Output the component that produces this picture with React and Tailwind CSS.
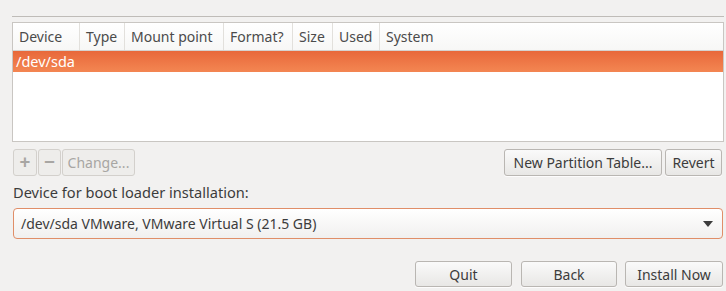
import React from "react";

const font = { fontFamily: '"Noto Sans", "Open Sans", sans-serif' };

function Btn({ children, className = "" }) {
  return (
    <div
      className={
        "flex items-center justify-center rounded-[3px] border border-[#b9b6b2] bg-gradient-to-b from-[#fafafa] to-[#e8e7e5] text-[14px] text-[#3c3c3c] shadow-[0_1px_0_rgba(255,255,255,0.8)] " +
        className
      }
    >
      {children}
    </div>
  );
}

function DisBtn({ children, className = "" }) {
  return (
    <div
      className={
        "flex items-center justify-center rounded-[3px] border border-[#d3d0cc] bg-[#eeedeb] text-[14px] text-[#a8a6a3] " +
        className
      }
    >
      {children}
    </div>
  );
}

export default function App() {
  const cols = [
    ["Device", "w-[67px]"],
    ["Type", "w-[45px]"],
    ["Mount point", "w-[99px]"],
    ["Format?", "w-[69px]"],
    ["Size", "w-[40px]"],
    ["Used", "w-[47px]"],
  ];
  return (
    <div
      className="w-[726px] h-[291px] bg-[#f2f1f0] overflow-hidden flex flex-col"
      style={font}
    >
      <div className="ml-3 mr-[2px] mt-4 h-px bg-[#bfbcb8]" />
      <div className="ml-3 mr-[2px] mt-[5px] h-[120px] border border-[#c9c6c2] bg-white flex flex-col">
        <div className="flex h-[28px] border-b border-[#d5d3cf] bg-gradient-to-b from-[#ffffff] to-[#f7f7f6] text-[14px] text-[#4b4b4b]">
          {cols.map(([t, w]) => (
            <div
              key={t}
              className={w + " flex items-center pl-[6px] border-r border-[#e2e0dc]"}
            >
              {t}
            </div>
          ))}
          <div className="flex-1 flex items-center pl-[6px]">System</div>
        </div>
        <div className="h-[21px] flex items-center pl-[3px] bg-gradient-to-b from-[#e8683a] to-[#f38652] text-white text-[14.5px]">
          /dev/sda
        </div>
      </div>
      <div className="flex mt-[7px] ml-[13px] mr-[4px] h-[27px]">
        <DisBtn className="w-[24px] h-[27px] text-[19px] font-bold text-[#a3a19e]">+</DisBtn>
        <DisBtn className="ml-px w-[23px] h-[27px] text-[19px] font-bold text-[#a3a19e]">−</DisBtn>
        <DisBtn className="ml-px w-[73px] h-[27px]">Change...</DisBtn>
        <div className="flex-1" />
        <Btn className="w-[158px] h-[27px]">New Partition Table...</Btn>
        <Btn className="ml-[3px] w-[57px] h-[27px]">Revert</Btn>
      </div>
      <div className="ml-[13px] mt-[6px] text-[14.6px] text-[#3c3c3c] leading-[20px]">
        Device for boot loader installation:
      </div>
      <div className="ml-[13px] mr-[3px] mt-[6px] h-[31px] rounded-[4px] border border-[#e08e68] bg-gradient-to-b from-[#ffffff] to-[#f1f0ef] flex items-center pl-[7px] pr-[9px] text-[14px] text-[#3c3c3c]">
        <span className="flex-1">/dev/sda VMware, VMware Virtual S (21.5 GB)</span>
        <svg width="10" height="6" viewBox="0 0 10 6">
          <path d="M0 0 L10 0 L5 6 Z" fill="#3c3c3c" />
        </svg>
      </div>
      <div className="flex justify-end mr-[3px] mt-[22px]">
        <Btn className="w-[97px] h-[26px]">Quit</Btn>
        <Btn className="ml-[9px] w-[96px] h-[26px]">Back</Btn>
        <Btn className="ml-[8px] w-[98px] h-[26px]">Install Now</Btn>
      </div>
    </div>
  );
}
